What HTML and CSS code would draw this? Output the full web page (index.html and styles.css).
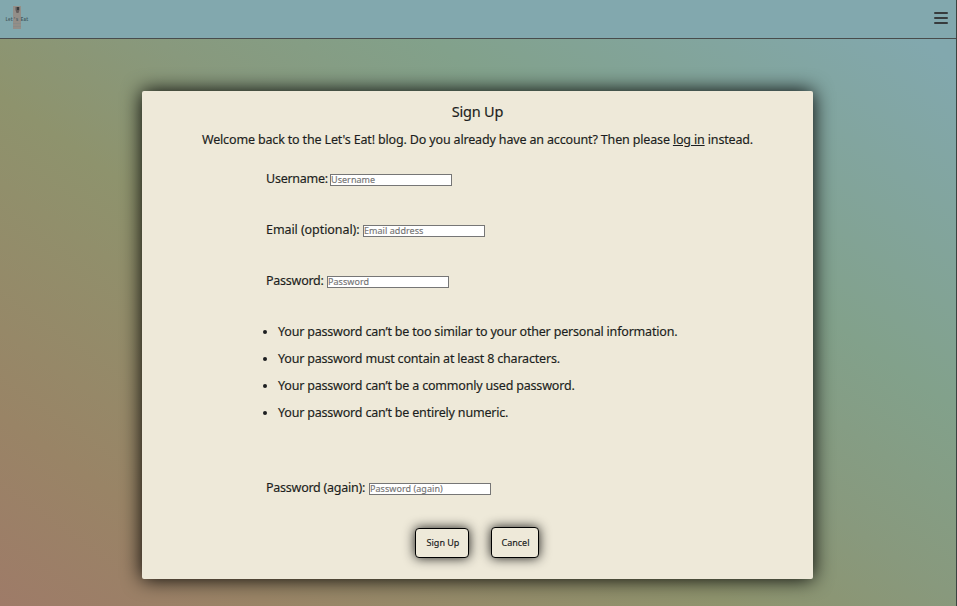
FILE: index.html
```html
<!DOCTYPE html>
<html lang="en">
<head>
<meta charset="utf-8">
<meta name="viewport" content="width=device-width, initial-scale=1">
<title>Sign Up</title>
<link rel="stylesheet" href="styles.css">
</head>
<body>
<div class="page">
<header class="navbar">
  <a class="logo" href="#" aria-label="Home">
    <svg width="26" height="26" viewBox="0 0 26 26">
      <rect x="8" y="2" width="8" height="23" fill="#938e88"/>
      <path d="M10.500 3h4v3l-1 3h-2l-1-3z" fill="#655f5d"/>
      <path d="M12 3h2v3h-2z" fill="#383b3d"/>
      <path d="M8 19.500h8M8 22.500h8" stroke="#858a88" stroke-width=".7"/>
      <text x="0.500" y="17" class="logo-text" textLength="23" lengthAdjust="spacingAndGlyphs">Let's Eat</text>
    </svg>
  </a>
  <button class="menu" aria-label="Menu"><span></span><span></span><span></span></button>
</header>
<main>
  <section class="card">
    <h1>Sign Up</h1>
    <p class="intro">Welcome back to the Let's Eat! blog. Do you already have an account? Then please <a href="#">log in</a> instead.</p>
    <form>
      <div class="field"><label class="l-user" for="u">Username:</label><input id="u" placeholder="Username"></div>
      <div class="field"><label class="l-email" for="e">Email (optional):</label><input id="e" placeholder="Email address"></div>
      <div class="field"><label class="l-pass" for="p">Password:</label><input id="p" type="password" placeholder="Password"></div>
      <ul>
        <li>Your password can’t be too similar to your other personal information.</li>
        <li>Your password must contain at least 8 characters.</li>
        <li>Your password can’t be a commonly used password.</li>
        <li>Your password can’t be entirely numeric.</li>
      </ul>
      <div class="field"><label class="l-again" for="a">Password (again):</label><input id="a" type="password" placeholder="Password (again)"></div>
      <div class="actions">
        <button class="btn submit" type="button">Sign Up</button>
        <button class="btn cancel" type="button">Cancel</button>
      </div>
    </form>
  </section>
</main>
</div>
</body>
</html>
```
FILE: styles.css
```css
* { box-sizing: border-box; }
body {
  margin: 0;
  height: 606px;
  overflow: hidden;
  background: #3c4340;
  color: #1c1e20;
  font: 12.5px/20px "Noto Sans", "Open Sans", sans-serif;
  -webkit-text-stroke: 0.15px;
}
.page {
  width: 956px;
  height: 606px;
  background: linear-gradient(35deg, #9e7b68 0%, #998466 15%, #8e936d 40%, #88997d 53%, #82a18b 68%, #82a8ae 95%);
}
.navbar {
  height: 39px;
  display: flex;
  justify-content: space-between;
  background: #82a8ae;
  border-bottom: 1px solid #484c4c;
}
.logo { margin: 4px 0 0 5px; height: 26px; }
.logo svg { display: block; overflow: visible; }
.logo-text { font: bold 4.5px "Liberation Mono", monospace; fill: #465a60; }
.menu {
  width: 14px;
  height: 14px;
  margin: 11px 8px 0 0;
  padding: 1px 0;
  border: 0;
  background: none;
  display: flex;
  flex-direction: column;
  gap: 3px;
}
.menu span { height: 2px; width: 14px; background: #373b3d; border-radius: 1px; }
main { padding: 52px 0 0 142px; }
.card {
  width: 671px;
  height: 488px;
  padding-top: 10px;
  border-radius: 2px;
  background: #eee9d9;
  box-shadow: 0 0 20px #000;
}
h1 {
  margin: 0;
  font-size: 14.5px;
  line-height: 20px;
  font-weight: 400;
  text-align: center;
  letter-spacing: -0.2px;
}
.intro { margin: 9px 0 19px; text-align: center; white-space: nowrap; letter-spacing: -0.155px; }
.intro a { color: inherit; text-underline-offset: 1px; }
form { padding-left: 124px; }
.field { display: flex; height: 20px; margin-bottom: 31px; }
.field label { white-space: nowrap; letter-spacing: -0.25px; }
.l-user { width: 64px; }
.l-email { width: 97px; }
.field .l-email { letter-spacing: -0.07px; }
.l-pass { width: 61px; }
.l-again { width: 103px; }
input {
  width: 122px;
  height: 12px;
  margin: 5px 0 0;
  padding: 0 0 1px;
  border: 1px solid #767676;
  border-radius: 0;
  background: #fff;
  font: 9px/9px "Noto Sans", sans-serif;
  letter-spacing: 0.05px;
}
input::placeholder { color: #757575; opacity: 1; }
ul { margin: 0 0 48px; padding-left: 12px; }
li { height: 27px; white-space: nowrap; letter-spacing: -0.19px; }
.actions { display: flex; align-items: flex-end; gap: 22px; margin: -2px 0 0 149px; height: 31px; }
.btn {
  padding: 0;
  border: 1px solid #000;
  border-radius: 4px;
  background: #eee9d9;
  color: #17191a;
  font: 9px/20px "Noto Sans", sans-serif;
  box-shadow: 0 0 12px rgba(0, 0, 0, 0.9);
}
.submit { width: 54px; height: 30px; padding-left: 2px; }
.cancel { width: 48px; height: 31px; padding-left: 1px; }
```
